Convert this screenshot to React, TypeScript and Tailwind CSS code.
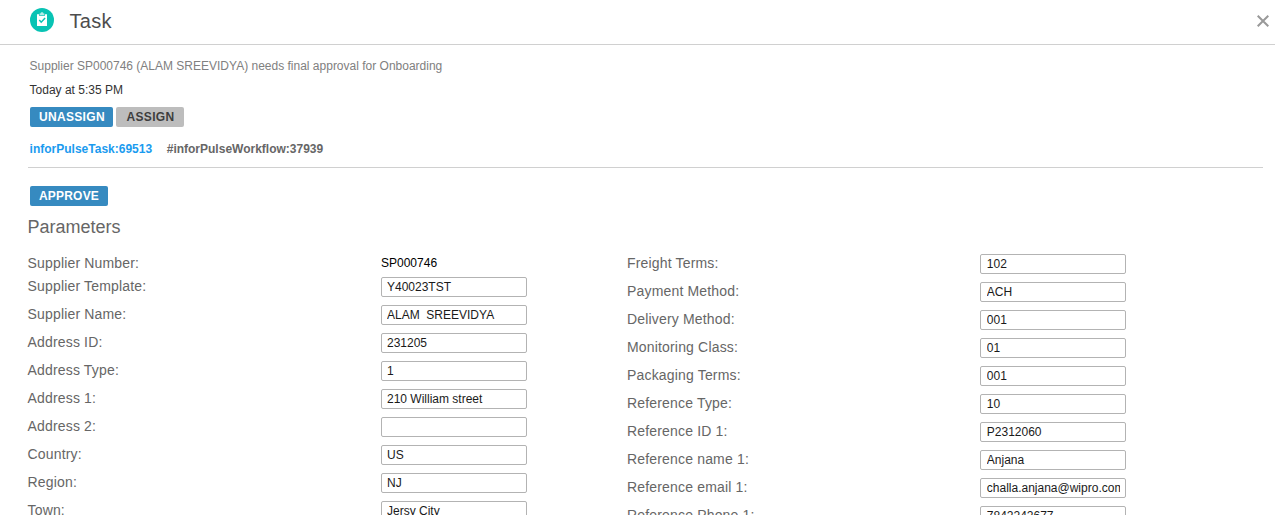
type Field = { label: string; value: string; readOnly?: boolean };

const leftFields: Field[] = [
  { label: "Supplier Number:", value: "SP000746", readOnly: true },
  { label: "Supplier Template:", value: "Y40023TST" },
  { label: "Supplier Name:", value: "ALAM  SREEVIDYA" },
  { label: "Address ID:", value: "231205" },
  { label: "Address Type:", value: "1" },
  { label: "Address 1:", value: "210 William street" },
  { label: "Address 2:", value: "" },
  { label: "Country:", value: "US" },
  { label: "Region:", value: "NJ" },
  { label: "Town:", value: "Jersy City" },
];

const rightFields: Field[] = [
  { label: "Freight Terms:", value: "102" },
  { label: "Payment Method:", value: "ACH" },
  { label: "Delivery Method:", value: "001" },
  { label: "Monitoring Class:", value: "01" },
  { label: "Packaging Terms:", value: "001" },
  { label: "Reference Type:", value: "10" },
  { label: "Reference ID 1:", value: "P2312060" },
  { label: "Reference name 1:", value: "Anjana" },
  { label: "Reference email 1:", value: "challa.anjana@wipro.com" },
  { label: "Reference Phone 1:", value: "7842242677" },
];

function TaskIcon() {
  return (
    <svg className="size-6 shrink-0" viewBox="0 0 24 24" fill="none">
      <circle cx="12" cy="12" r="12" fill="#08c3b4" />
      <path d="M7 6.2h2v1.6h6V6.2h2V18H7z" fill="#fff" />
      <path d="M9.6 7V5.6h.9c.1-.8.7-1.3 1.5-1.3s1.4.5 1.5 1.3h.9V7z" fill="#b5ece7" />
      <path d="m9.3 12.1 1.9 2.1 3.9-4.1" stroke="#08c3b4" strokeWidth="1.5" />
    </svg>
  );
}

function FieldRow({ field, inputClass }: { field: Field; inputClass: string }) {
  return (
    <div className={`flex items-start ${field.readOnly ? "h-[23px]" : "h-7"}`}>
      <label className="w-[353px] shrink-0 text-[14px] leading-[18px] tracking-[0.17px] text-[#666]">
        {field.label}
      </label>
      {field.readOnly ? (
        <span className="pl-[0.5px] text-[12px] leading-[18px] text-black">{field.value}</span>
      ) : (
        <input
          className={`h-5 w-[146px] rounded-[2px] border border-[#b3b3b3] bg-white text-[12px] text-[#1a1a1a] outline-none ${inputClass}`}
          defaultValue={field.value}
        />
      )}
    </div>
  );
}

export default function App() {
  return (
    <div className="flex h-[515px] flex-col overflow-hidden bg-white font-['Liberation_Sans',Arial,sans-serif]">
      <header className="flex h-[45px] shrink-0 items-center border-b border-[#d0d0d0] pr-1.5 pb-1 pl-[30px]">
        <TaskIcon />
        <h1 className="ml-[15.5px] flex-1 pt-px text-[20px] leading-6 tracking-[0.3px] text-[#4d4d4d]">Task</h1>
        <button aria-label="Close" className="pt-px">
          <svg className="size-3" viewBox="0 0 12 12" stroke="#999" strokeWidth="2">
            <path d="m.7.7 10.6 10.6M11.3.7.7 11.3" />
          </svg>
        </button>
      </header>

      <section className="mr-3 ml-7 flex h-[123px] shrink-0 flex-col items-start border-b border-[#d0d0d0] pt-3 pl-[1.6px] text-[12px]">
        <p className="leading-[18px] text-[#808080]">
          Supplier SP000746 (ALAM SREEVIDYA) needs final approval for Onboarding
        </p>
        <p className="mt-1.5 leading-[18px] text-[#333]">Today at 5:35 PM</p>
        <div className="mt-2 ml-[0.4px] flex gap-[3px] font-bold tracking-[0.3px]">
          <button className="h-5 w-[83px] rounded-[2px] bg-[#368ac0] pl-px text-white">UNASSIGN</button>
          <button className="h-5 w-[68px] rounded-[2px] bg-[#bdbdbd] pl-px text-[#3d3d3d]">ASSIGN</button>
        </div>
        <div className="mt-[13px] flex gap-[14.6px] leading-[18px] font-bold">
          <a className="text-[#1a9bef]">inforPulseTask:69513</a>
          <span className="text-[#666]">#inforPulseWorkflow:37939</span>
        </div>
      </section>

      <main className="flex flex-col items-start pt-[18px] pl-[27.5px]">
        <button className="ml-[2.5px] h-5 w-[78px] rounded-[2px] bg-[#368ac0] text-[12px] font-bold tracking-[0.2px] text-white">
          APPROVE
        </button>
        <h2 className="mt-[9px] text-[18px] leading-6 text-[#666]">Parameters</h2>
        <div className="mt-[15px] flex">
          <div className="w-[599.5px]">
            {leftFields.map((f) => (
              <FieldRow key={f.label} field={f} inputClass="pr-[5px] pl-[5.5px]" />
            ))}
          </div>
          <div>
            {rightFields.map((f) => (
              <FieldRow key={f.label} field={f} inputClass="pr-[5px] pl-[5.8px]" />
            ))}
          </div>
        </div>
      </main>
    </div>
  );
}
